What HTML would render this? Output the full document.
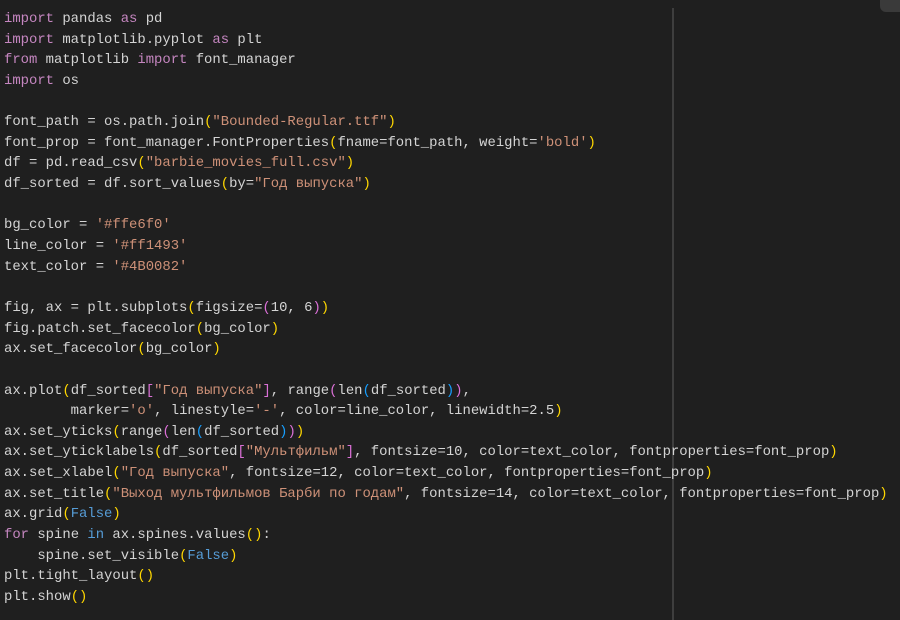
<!DOCTYPE html>
<html><head><meta charset="utf-8"><style>
html,body{margin:0;padding:0;background:#1f1f1f;width:900px;height:620px;overflow:hidden}
pre{margin:0;position:absolute;left:4px;top:9px;font-family:"Liberation Mono","DejaVu Sans Mono",monospace;font-size:13.9px;line-height:20.64px;color:#d4d4d4;white-space:pre}
.k{color:#c586c0}.s{color:#ce9178}.b{color:#569cd6}.y{color:#ffd700}.p{color:#da70d6}.l{color:#179fff}
.vl{position:absolute;left:672px;top:8px;width:2px;height:612px;background:#3e3e3e}
.tr{position:absolute;left:880px;top:-10px;width:30px;height:22px;border-radius:6px;background:#3a3a3a}
</style></head><body>
<div class="vl"></div><div class="tr"></div>
<pre><span class="k">import</span> pandas <span class="k">as</span> pd
<span class="k">import</span> matplotlib.pyplot <span class="k">as</span> plt
<span class="k">from</span> matplotlib <span class="k">import</span> font_manager
<span class="k">import</span> os

font_path = os.path.join<span class="y">(</span><span class="s">"Bounded-Regular.ttf"</span><span class="y">)</span>
font_prop = font_manager.FontProperties<span class="y">(</span>fname=font_path, weight=<span class="s">'bold'</span><span class="y">)</span>
df = pd.read_csv<span class="y">(</span><span class="s">"barbie_movies_full.csv"</span><span class="y">)</span>
df_sorted = df.sort_values<span class="y">(</span>by=<span class="s">"Год выпуска"</span><span class="y">)</span>

bg_color = <span class="s">'#ffe6f0'</span>
line_color = <span class="s">'#ff1493'</span>
text_color = <span class="s">'#4B0082'</span>

fig, ax = plt.subplots<span class="y">(</span>figsize=<span class="p">(</span>10, 6<span class="p">)</span><span class="y">)</span>
fig.patch.set_facecolor<span class="y">(</span>bg_color<span class="y">)</span>
ax.set_facecolor<span class="y">(</span>bg_color<span class="y">)</span>

ax.plot<span class="y">(</span>df_sorted<span class="p">[</span><span class="s">"Год выпуска"</span><span class="p">]</span>, range<span class="p">(</span>len<span class="l">(</span>df_sorted<span class="l">)</span><span class="p">)</span>,
        marker=<span class="s">'o'</span>, linestyle=<span class="s">'-'</span>, color=line_color, linewidth=2.5<span class="y">)</span>
ax.set_yticks<span class="y">(</span>range<span class="p">(</span>len<span class="l">(</span>df_sorted<span class="l">)</span><span class="p">)</span><span class="y">)</span>
ax.set_yticklabels<span class="y">(</span>df_sorted<span class="p">[</span><span class="s">"Мультфильм"</span><span class="p">]</span>, fontsize=10, color=text_color, fontproperties=font_prop<span class="y">)</span>
ax.set_xlabel<span class="y">(</span><span class="s">"Год выпуска"</span>, fontsize=12, color=text_color, fontproperties=font_prop<span class="y">)</span>
ax.set_title<span class="y">(</span><span class="s">"Выход мультфильмов Барби по годам"</span>, fontsize=14, color=text_color, fontproperties=font_prop<span class="y">)</span>
ax.grid<span class="y">(</span><span class="b">False</span><span class="y">)</span>
<span class="k">for</span> spine <span class="b">in</span> ax.spines.values<span class="y">()</span>:
    spine.set_visible<span class="y">(</span><span class="b">False</span><span class="y">)</span>
plt.tight_layout<span class="y">()</span>
plt.show<span class="y">()</span></pre>
</body></html>
